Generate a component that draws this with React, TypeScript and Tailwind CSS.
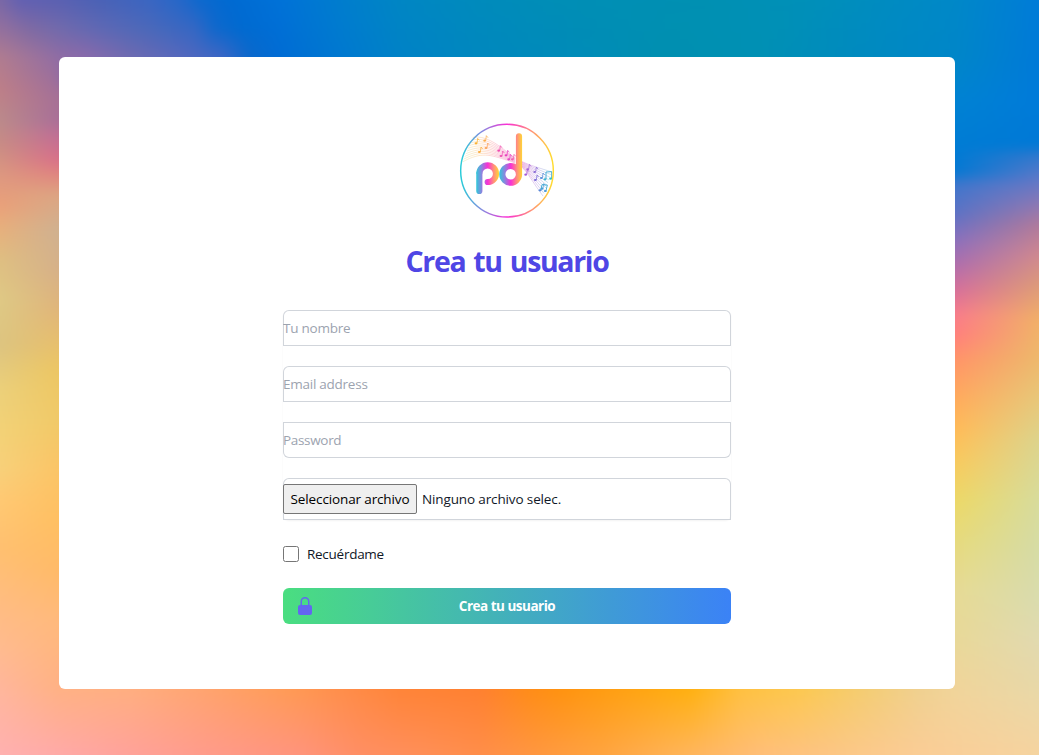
import React from "react";

type Stop = [number, string];

const TOP_OUTER: Stop[] = [[0, "#7a68a6"], [20, "#6260b2"], [59, "#5a60b2"], [100, "#4a62b6"], [150, "#3a66c2"], [180, "#2567c9"], [200, "#0c69ce"], [230, "#006ad2"], [280, "#0072d8"], [340, "#007dce"], [400, "#0086c4"], [480, "#008bbc"], [560, "#008eb6"], [700, "#0090b2"], [800, "#0090b8"], [880, "#008cc0"], [955, "#0088c8"], [1039, "#007cd8"]];
const TOP_MIDDLE: Stop[] = [[0, "#93709e"], [30, "#7e6aa4"], [59, "#716aac"], [100, "#5e68b4"], [150, "#4a68ba"], [195, "#3467c4"], [215, "#0f68cc"], [240, "#006ad0"], [280, "#006fd6"], [340, "#007bcf"], [400, "#0084c5"], [480, "#0089bd"], [580, "#008db6"], [680, "#0090b1"], [780, "#0090b6"], [870, "#008bc0"], [955, "#0087c8"], [1039, "#007bd8"]];
const TOP_INNER: Stop[] = [[0, "#b07c90"], [59, "#8f6ca4"], [85, "#8a6aaa"], [130, "#6e6ab0"], [180, "#5668bc"], [222, "#3c66c4"], [250, "#0a68cb"], [280, "#006cd4"], [340, "#0078d0"], [400, "#0082c6"], [480, "#0088be"], [580, "#008cb8"], [665, "#008fb0"], [760, "#0090b4"], [860, "#008abf"], [955, "#0086c8"], [1039, "#007ad8"]];
const BOTTOM_INNER: Stop[] = [[0, "#ffb69c"], [59, "#ffb184"], [130, "#ffae80"], [200, "#ffa470"], [290, "#ff9a55"], [350, "#ff8c48"], [400, "#ff8438"], [480, "#ff8030"], [530, "#ff8c18"], [560, "#ff9210"], [620, "#ffa012"], [690, "#ffb010"], [740, "#ffc040"], [800, "#fcc850"], [860, "#f4cc70"], [920, "#efd090"], [955, "#f0d49a"], [1039, "#e8d8a8"]];
const BOTTOM_OUTER: Stop[] = [[0, "#ffb1b0"], [59, "#ffaaa8"], [110, "#ffa49e"], [200, "#ff9c8c"], [300, "#ff947c"], [360, "#ff8f64"], [420, "#ff8f58"], [480, "#ff8e4a"], [540, "#ff9840"], [600, "#ffa440"], [680, "#ffb458"], [760, "#ffbe78"], [850, "#fcc888"], [920, "#fbcd96"], [1039, "#f6d4a0"]];
const LEFT_OUTER: Stop[] = [[57, "#b07c90"], [90, "#be7f88"], [120, "#bb8a8b"], [145, "#c98c85"], [175, "#dd9880"], [205, "#eaa07a"], [225, "#e8ae7c"], [260, "#dfbf82"], [300, "#dfc985"], [345, "#ddc480"], [390, "#ecd07a"], [430, "#f3d277"], [470, "#f8d07a"], [500, "#ffc973"], [550, "#ffc070"], [600, "#ffbd80"], [650, "#ffbb90"], [689, "#ffb69c"]];
const LEFT_INNER: Stop[] = [[57, "#8f6ca4"], [100, "#a67095"], [120, "#a86f98"], [135, "#bf6e95"], [160, "#d97088"], [175, "#e0857f"], [195, "#dca582"], [230, "#cfb190"], [270, "#d6b088"], [310, "#e0b579"], [370, "#ecc663"], [420, "#f0c968"], [470, "#fbc466"], [520, "#ffbf62"], [570, "#ffba68"], [620, "#ffb97c"], [689, "#ffb184"]];
const RIGHT_INNER: Stop[] = [[57, "#0086c8"], [100, "#0082d2"], [150, "#007bd4"], [172, "#0578d2"], [185, "#3f76cc"], [215, "#5f72c4"], [240, "#8a70bc"], [265, "#b06eac"], [290, "#d6709a"], [315, "#f87c8a"], [335, "#ff807c"], [360, "#ff9468"], [400, "#ffab5c"], [430, "#ffbb58"], [460, "#f8c95e"], [500, "#ecd867"], [540, "#e6da7c"], [590, "#e6da94"], [640, "#e8d898"], [689, "#f0d49a"]];
const RIGHT_OUTER: Stop[] = [[57, "#007ad8"], [100, "#007bda"], [145, "#0079d6"], [155, "#2f78ce"], [180, "#6078c8"], [205, "#8d78b4"], [225, "#b07a9c"], [255, "#d08890"], [285, "#dd9a7a"], [320, "#f2b068"], [360, "#eeb96c"], [400, "#e8c87a"], [440, "#ddd48c"], [500, "#d8dc9c"], [550, "#d6dca6"], [600, "#dadcae"], [640, "#e2dab0"], [689, "#e8d8a8"]];

function Gradient({ id, stops, vertical }: { id: string; stops: Stop[]; vertical?: boolean }) {
  const first = stops[0][0];
  const last = stops[stops.length - 1][0];
  return (
    <linearGradient
      id={id}
      gradientUnits="userSpaceOnUse"
      x1={vertical ? 0 : first}
      x2={vertical ? 0 : last}
      y1={vertical ? first : 0}
      y2={vertical ? last : 0}
    >
      {stops.map(([at, color]) => (
        <stop key={at} offset={(at - first) / (last - first)} stopColor={color} />
      ))}
    </linearGradient>
  );
}

function Fade({ id, x1 = 0, x2 = 0, y1 = 0, y2 = 0 }: { id: string; x1?: number; x2?: number; y1?: number; y2?: number }) {
  return (
    <>
      <linearGradient id={`${id}-ramp`} gradientUnits="userSpaceOnUse" x1={x1} x2={x2} y1={y1} y2={y2}>
        <stop offset="0" stopColor="#fff" stopOpacity="0" />
        <stop offset="1" stopColor="#fff" stopOpacity="1" />
      </linearGradient>
      <mask id={id} maskUnits="userSpaceOnUse" x="-30" y="-30" width="1100" height="815">
        <rect x="-30" y="-30" width="1100" height="815" fill={`url(#${id}-ramp)`} />
      </mask>
    </>
  );
}

/* Soft multicolour wallpaper: each side cross-fades from its outer to its inner colours. */
function Wallpaper() {
  return (
    <svg className="absolute inset-0 h-full w-full" viewBox="0 0 1039 755" preserveAspectRatio="none" aria-hidden="true">
      <defs>
        <Gradient id="to" stops={TOP_OUTER} />
        <Gradient id="tm" stops={TOP_MIDDLE} />
        <Gradient id="ti" stops={TOP_INNER} />
        <Gradient id="bo" stops={BOTTOM_OUTER} />
        <Gradient id="bi" stops={BOTTOM_INNER} />
        <Gradient id="lo" stops={LEFT_OUTER} vertical />
        <Gradient id="li" stops={LEFT_INNER} vertical />
        <Gradient id="ro" stops={RIGHT_OUTER} vertical />
        <Gradient id="ri" stops={RIGHT_INNER} vertical />
        <Fade id="ftm" y1={0} y2={28} />
        <Fade id="ft" y1={28} y2={57} />
        <Fade id="fb" y1={755} y2={689} />
        <Fade id="fl" x1={0} x2={59} />
        <Fade id="fr" x1={1039} x2={955} />
        <filter id="soft" filterUnits="userSpaceOnUse" x="-30" y="-30" width="1100" height="815" colorInterpolationFilters="sRGB">
          <feGaussianBlur stdDeviation="5" />
        </filter>
      </defs>
      <g filter="url(#soft)">
        <rect x="50" y="57" width="450" height="632" fill="url(#li)" />
        <rect x="500" y="57" width="470" height="632" fill="url(#ri)" />
        <rect x="-30" y="-30" width="1100" height="115" fill="url(#to)" />
        <rect x="-30" y="-30" width="1100" height="115" fill="url(#tm)" mask="url(#ftm)" />
        <rect x="-30" y="-30" width="1100" height="115" fill="url(#ti)" mask="url(#ft)" />
        <rect x="-30" y="660" width="1100" height="125" fill="url(#bo)" />
        <rect x="-30" y="660" width="1100" height="125" fill="url(#bi)" mask="url(#fb)" />
        <rect x="-30" y="57" width="89" height="632" fill="url(#lo)" />
        <rect x="-30" y="57" width="89" height="632" fill="url(#li)" mask="url(#fl)" />
        <rect x="955" y="57" width="115" height="632" fill="url(#ro)" />
        <rect x="955" y="57" width="115" height="632" fill="url(#ri)" mask="url(#fr)" />
      </g>
    </svg>
  );
}

const NOTES: [number, number, string][] = [
  [54, 64, "#f9b233"], [64, 90, "#fbab3c"], [80, 56, "#fbac4a"], [84, 78, "#fca35a"],
  [122, 86, "#f04bb0"], [129, 102, "#ee4fb4"], [144, 100, "#e83fc0"], [152, 112, "#e745c4"], [163, 112, "#f060b0"],
  [203, 158, "#a45ad8"], [209, 142, "#a463d6"], [230, 150, "#8a68d4"], [232, 174, "#7b6ad6"],
  [250, 168, "#5a8ed8"], [252, 200, "#4a9cd6"],
];

function Logo() {
  const lines = [0, 1, 2, 3, 4, 5, 6, 7, 8, 9];
  return (
    <svg className="h-24 w-24" viewBox="3 3 288 288" fill="none" role="img" aria-label="pd">
      <defs>
        {[["g-ring", 10, 284], ["g-p", 54, 124], ["g-d", 123, 194]].map(([id, a, b]) => (
          <linearGradient key={id} id={String(id)} gradientUnits="userSpaceOnUse" x1={a} x2={b} y1="0" y2="0">
            <stop offset="0" stopColor="#2bcbd8" />
            <stop offset=".25" stopColor="#8d83df" />
            <stop offset=".5" stopColor="#fa2fd5" />
            <stop offset=".76" stopColor="#ff907a" />
            <stop offset="1" stopColor="#ffdc30" />
          </linearGradient>
        ))}
        <linearGradient id="g-wave" gradientUnits="userSpaceOnUse" x1="12" x2="285" y1="0" y2="0">
          <stop offset="0" stopColor="#dbe08a" />
          <stop offset=".2" stopColor="#fdb868" />
          <stop offset=".45" stopColor="#f768ac" />
          <stop offset=".65" stopColor="#e060c4" />
          <stop offset=".82" stopColor="#a478d8" />
          <stop offset="1" stopColor="#58c3d0" />
        </linearGradient>
      </defs>
      {lines.map((i) => (
        <path
          key={i}
          d={`M${44 - i * 3.4} ${46 + i * 8.2}C${80 - i} ${40 + i * 5.4} ${112 - i * 2} ${62 + i * 4} 150 ${92 + i * 2.6}S${212 - i * 1.5} ${128 + i * 2} ${282 - i * 3} ${150 + i * 8}`}
          stroke="url(#g-wave)"
          strokeWidth="1.5"
          opacity=".7"
        />
      ))}
      {NOTES.map(([x, y, c]) => (
        <g key={`${x}-${y}`} stroke={c} strokeWidth="2.2">
          <ellipse cx={x} cy={y} rx="4.2" ry="3.2" fill={c} stroke="none" />
          <path d={`M${x + 3} ${y}l2-15l5 6`} />
        </g>
      ))}
      <g stroke="#3fa9d4" strokeWidth="2.8">
        <path d="M264 171V150l17-1v20M248 206l4-18 16 1-4 17" />
        <ellipse cx="261" cy="172" rx="4.6" ry="3.2" fill="#3fb6cf" stroke="none" />
        <ellipse cx="278" cy="170" rx="4.6" ry="3.2" fill="#36c3c8" stroke="none" />
        <ellipse cx="246" cy="205" rx="4.6" ry="3.2" fill="#568ad8" stroke="none" />
        <ellipse cx="262" cy="207" rx="4.6" ry="3.2" fill="#4b9ad6" stroke="none" />
      </g>
      <circle cx="147" cy="146" r="139" stroke="url(#g-ring)" strokeWidth="4.4" />
      <line x1="172" x2="172" y1="105" y2="130" stroke="#fff" strokeWidth="3" />
      <g stroke="url(#g-p)" strokeWidth="18.5" strokeLinecap="round">
        <line x1="64" x2="64.01" y1="155" y2="207" />
        <circle cx="89" cy="155" r="25" pathLength="100" strokeDasharray="25 25 50 0" />
      </g>
      <circle cx="158" cy="157" r="25" stroke="url(#g-d)" strokeWidth="18.5" />
      <line x1="183" x2="183.01" y1="43" y2="157" stroke="url(#g-d)" strokeWidth="18.5" strokeLinecap="round" />
    </svg>
  );
}

const field =
  "block h-9 w-full bg-transparent p-0 text-[13.5px] leading-6 text-[#111827] ring-1 ring-inset ring-[#d1d5db] outline-none placeholder:text-[#9ca3af]";

export default function App() {
  return (
    <div className="relative h-[755px] w-full overflow-hidden font-['Open_Sans','Noto_Sans',sans-serif] text-[#111827]">
      <Wallpaper />
      <main className="relative ml-[59px] mt-[57px] flex h-[632px] w-[896px] flex-col items-center rounded-md bg-white pt-[66px]">
        <Logo />
        <h1 className="mt-[24px] whitespace-nowrap text-[28.5px] font-bold leading-9 tracking-[-1.35px] text-[#4f46e5] [word-spacing:2px]">Crea tu usuario</h1>
        <form className="mt-[31px] w-[448px]">
          <div className="flex flex-col gap-5 rounded-md shadow-xs">
            <input className={`${field} rounded-t-md tracking-[-0.24px]`} placeholder="Tu nombre" />
            <input className={`${field} rounded-t-md tracking-[-0.25px]`} placeholder="Email address" />
            <input className={`${field} rounded-b-md tracking-[-0.32px]`} type="password" placeholder="Password" />
            <label className="flex h-[42px] items-center rounded-t-md text-[13.5px] leading-6 ring-1 ring-inset ring-[#d1d5db]">
              <span className="flex h-[30px] w-[134px] items-center justify-center whitespace-nowrap rounded-xs border border-[#767676] bg-[#efefef] tracking-[-0.13px] text-black">
                Seleccionar archivo
              </span>
              <span className="ml-[5px] whitespace-nowrap tracking-[-0.13px]">Ninguno archivo selec.</span>
            </label>
          </div>
          <label className="mt-[22px] flex h-6 items-center gap-2 text-[13.5px] leading-6">
            <span className="h-4 w-4 rounded-[2.5px] border border-[#767676] bg-white" />
            <span className="tracking-[-0.27px]">Recuérdame</span>
          </label>
          <button
            type="button"
            className="relative mt-[22px] flex h-9 w-full items-center justify-center rounded-md bg-linear-to-r/srgb from-[#4ade80] to-[#3b82f6] text-[13.5px] font-bold leading-5 text-white"
          >
            <svg className="absolute left-3 top-2 h-5 w-5 text-[#6366f1]" viewBox="0 0 20 20" fill="currentColor" aria-hidden="true">
              <path
                fillRule="evenodd"
                clipRule="evenodd"
                d="M10 1a4.5 4.5 0 00-4.5 4.5V9H5a2 2 0 00-2 2v6a2 2 0 002 2h10a2 2 0 002-2v-6a2 2 0 00-2-2h-.5V5.5A4.5 4.5 0 0010 1zm3 8V5.5a3 3 0 10-6 0V9h6z"
              />
            </svg>
            <span className="whitespace-nowrap tracking-[-0.5px]">Crea tu usuario</span>
          </button>
        </form>
      </main>
    </div>
  );
}
